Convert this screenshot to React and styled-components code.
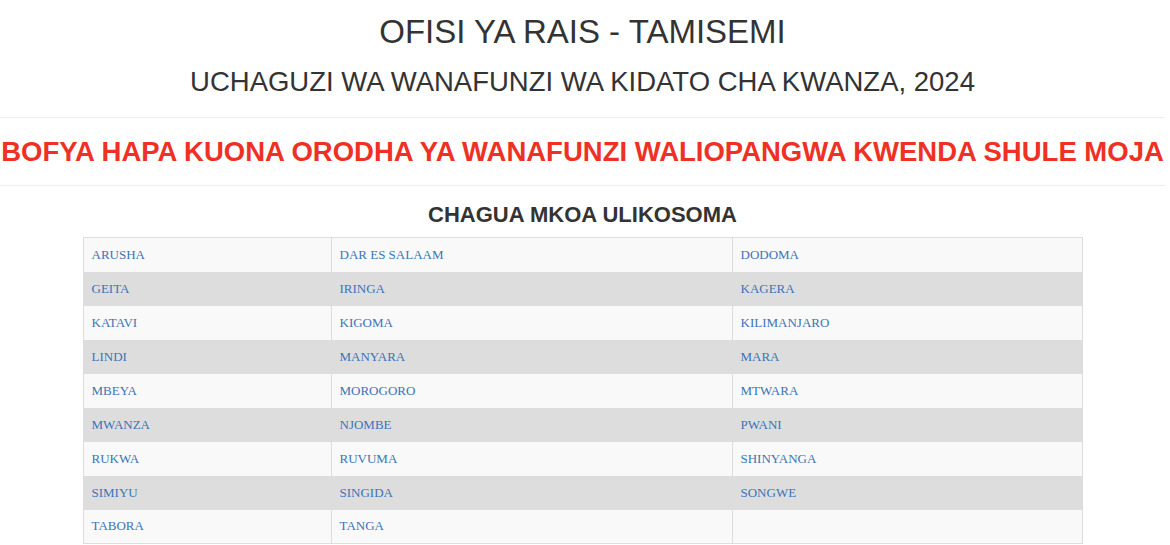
import styled, { createGlobalStyle } from 'styled-components';

const GlobalStyle = createGlobalStyle`
  body {
    margin: 0;
    background: #fff;
    font-family: 'Liberation Sans', Arial, sans-serif;
    color: #333;
  }
`;

const regions = [
  ['ARUSHA', 'DAR ES SALAAM', 'DODOMA'],
  ['GEITA', 'IRINGA', 'KAGERA'],
  ['KATAVI', 'KIGOMA', 'KILIMANJARO'],
  ['LINDI', 'MANYARA', 'MARA'],
  ['MBEYA', 'MOROGORO', 'MTWARA'],
  ['MWANZA', 'NJOMBE', 'PWANI'],
  ['RUKWA', 'RUVUMA', 'SHINYANGA'],
  ['SIMIYU', 'SINGIDA', 'SONGWE'],
  ['TABORA', 'TANGA', ''],
];

export default function App() {
  return (
    <Page>
      <GlobalStyle />
      <Title>OFISI YA RAIS - TAMISEMI</Title>
      <SubTitle>UCHAGUZI WA WANAFUNZI WA KIDATO CHA KWANZA, 2024</SubTitle>
      <Rule />
      <RedLink href="#">BOFYA HAPA KUONA ORODHA YA WANAFUNZI WALIOPANGWA KWENDA SHULE MOJA</RedLink>
      <Rule />
      <Heading>CHAGUA MKOA ULIKOSOMA</Heading>
      <Table>
        <colgroup>
          <col style={{ width: 248 }} />
          <col style={{ width: 401 }} />
          <col />
        </colgroup>
        <tbody>
          {regions.map((row, i) => (
            <Row key={i} $odd={i % 2 === 0}>
              {row.map((name, j) => (
                <Cell key={j}>{name && <RegionLink href="#">{name}</RegionLink>}</Cell>
              ))}
            </Row>
          ))}
        </tbody>
      </Table>
    </Page>
  );
}

const Page = styled.div`
  display: flex;
  flex-direction: column;
  align-items: center;
  width: 1165px;
`;

const Title = styled.h1`
  margin: 14px 0 0;
  font-size: 33px;
  font-weight: 400;
  line-height: 36px;
  color: #333;
`;

const SubTitle = styled.h2`
  margin: 17px 0 20px;
  font-size: 27.5px;
  font-weight: 400;
  line-height: 30px;
  color: #333;
`;

const Rule = styled.hr`
  align-self: stretch;
  margin: 0;
  border: 0;
  border-top: 1px solid #eee;
`;

const RedLink = styled.a`
  display: block;
  padding: 17px 0 16px;
  font-size: 27.5px;
  font-weight: 700;
  line-height: 34px;
  color: #ee3124;
  text-decoration: none;
  white-space: nowrap;
`;

const Heading = styled.h3`
  margin: 17px 0 10px;
  font-size: 22px;
  font-weight: 700;
  line-height: 24px;
  color: #333;
`;

const Table = styled.table`
  width: 1000px;
  border-collapse: collapse;
  border: 1px solid #ddd;
  table-layout: fixed;
`;

const Row = styled.tr`
  background: ${(p) => (p.$odd ? '#f9f9f9' : '#dddddd')};
  height: 34px;
`;

const Cell = styled.td`
  padding: 0 8px;
  border-left: 1px solid #ddd;
  border-right: 1px solid #ddd;
  font-family: 'Liberation Serif', 'Times New Roman', serif;
  font-size: 13px;
  vertical-align: middle;
`;

const RegionLink = styled.a`
  color: #3a74b8;
  text-decoration: none;
`;
